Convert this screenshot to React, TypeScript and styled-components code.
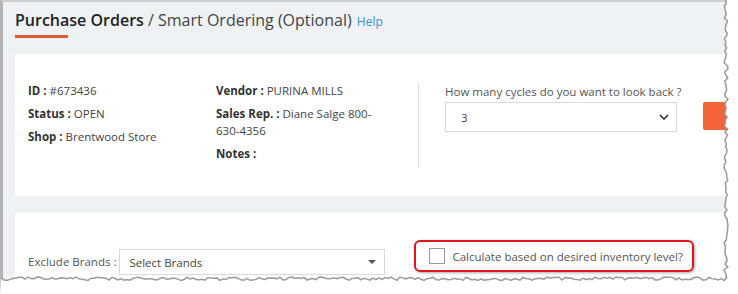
import React from 'react';
import styled, { createGlobalStyle } from 'styled-components';

const GlobalStyle = createGlobalStyle`
  html, body {
    margin: 0;
    padding: 0;
    background: #ffffff;
  }
  body {
    font-family: "Open Sans", "Liberation Sans", sans-serif;
    font-size: 11.5px;
    color: #333;
  }
`;

const Page = styled.div`
  position: relative;
  width: 738px;
  height: 294px;
  overflow: hidden;
`;

const Frame = styled.div`
  box-sizing: border-box;
  width: 735px;
  height: 294px;
  background: #eef2f5;
  border-left: 3px solid #b4b4b4;
  border-top: 2px solid #cfcfcf;
  padding: 0 0 0 12px;
  display: flex;
  flex-direction: column;
`;

const TitleBar = styled.div`
  padding-top: 7px;
  height: 52px;
  box-sizing: border-box;
`;

const Title = styled.h1`
  margin: 0;
  font-size: 16px;
  font-weight: 400;
  color: #444;
  line-height: 22px;
  white-space: nowrap;
`;

const Strong = styled.span`
  font-weight: 600;
  color: #222;
`;

const Help = styled.a`
  font-size: 12px;
  color: #3b8fd1;
  margin-left: 1px;
  text-decoration: none;
`;

const Underline = styled.div`
  width: 53px;
  height: 3px;
  background: #e05a33;
  margin-top: 2px;
`;

const Card = styled.div<{ $height: number }>`
  background: #fff;
  height: ${(p) => p.$height}px;
  flex-shrink: 0;
  box-sizing: border-box;
`;

const InfoRow = styled.div`
  display: flex;
  padding: 28px 0 0 13px;
`;

const Column = styled.div<{ $width: number; $pad: number }>`
  width: ${(p) => p.$width}px;
  padding-right: ${(p) => p.$pad}px;
  box-sizing: border-box;
  flex-shrink: 0;
  display: flex;
  flex-direction: column;
  gap: 6px;
`;

const Field = styled.div`
  line-height: 17px;
  color: #444;
`;

const Key = styled.b`
  font-weight: 700;
  color: #333;
`;

const CycleBlock = styled.div`
  flex-shrink: 0;
  border-left: 1px solid #e2e2e2;
  height: 86px;
  padding-left: 26px;
  display: flex;
  gap: 26px;
`;

const CycleInner = styled.div`
  width: 232px;
  flex-shrink: 0;
  padding-top: 2px;
`;

const Label = styled.div`
  color: #555;
  line-height: 16px;
  margin-bottom: 2px;
  white-space: nowrap;
`;

const SelectBox = styled.div<{ $width: number; $height: number }>`
  box-sizing: border-box;
  width: ${(p) => p.$width}px;
  height: ${(p) => p.$height}px;
  flex-shrink: 0;
  border: 1px solid #d9d9d9;
  background: #fff;
  display: flex;
  align-items: center;
  justify-content: space-between;
  color: #444;
`;

const SelectValue = styled.span<{ $pad: number }>`
  padding-left: ${(p) => p.$pad}px;
`;

const OrangeButton = styled.div`
  width: 40px;
  height: 28px;
  flex-shrink: 0;
  background: #f4623a;
  border-radius: 2px;
  margin-top: 20px;
`;

const Gap = styled.div`
  height: 17px;
  flex-shrink: 0;
`;

const FilterRow = styled.div`
  display: flex;
  align-items: flex-start;
  padding: 36px 0 0 13px;
`;

const FilterLabel = styled.span`
  color: #555;
  line-height: 26px;
  margin-right: 3px;
`;

const Highlight = styled.div`
  margin: -9px 0 0 29px;
  border: 2px solid #e0141c;
  border-radius: 6px;
  height: 32px;
  width: 280px;
  box-sizing: border-box;
  display: flex;
  align-items: center;
  padding-left: 13px;
  box-shadow: 1px 1px 3px rgba(0, 0, 0, 0.35);
`;

const Check = styled.span`
  width: 16px;
  height: 16px;
  border: 1px solid #9a9a9a;
  box-sizing: border-box;
  margin-right: 7px;
`;

const CheckText = styled.span`
  color: #555;
  white-space: nowrap;
`;

const Torn = styled.svg`
  position: absolute;
  left: 0;
  top: 0;
  pointer-events: none;
`;

function jagged(): { right: string; bottom: string } {
  let seed = 7;
  const rnd = () => {
    seed = (seed * 9301 + 49297) % 233280;
    return seed / 233280;
  };
  const r: string[] = [];
  for (let y = 0; y <= 279; y += 3) r.push(`${724 + rnd() * 4},${y}`);
  const b: string[] = [];
  for (let x = 727; x >= 0; x -= 3) b.push(`${x},${277 + rnd() * 3.5}`);
  return { right: r.join(' '), bottom: b.join(' ') };
}

const edge = jagged();

const App: React.FC = () => (
  <Page>
    <GlobalStyle />
    <Frame>
      <TitleBar>
        <Title>
          <Strong>Purchase Orders</Strong> / Smart Ordering (Optional) <Help>Help</Help>
        </Title>
        <Underline />
      </TitleBar>
      <Card $height={142}>
        <InfoRow>
          <Column $width={188} $pad={0}>
            <Field><Key>ID :</Key> #673436</Field>
            <Field><Key>Status :</Key> OPEN</Field>
            <Field><Key>Shop :</Key> Brentwood Store</Field>
          </Column>
          <Column $width={202} $pad={36}>
            <Field><Key>Vendor :</Key> PURINA MILLS</Field>
            <Field><Key>Sales Rep. :</Key> Diane Salge 800-630-4356</Field>
            <Field><Key>Notes :</Key></Field>
          </Column>
          <CycleBlock>
            <CycleInner>
              <Label>How many cycles do you want to look back ?</Label>
              <SelectBox $width={232} $height={30}>
                <SelectValue $pad={15}>3</SelectValue>
                <svg width="10" height="6" viewBox="0 0 10 6" style={{ marginRight: 7 }}>
                  <path d="M1 1 L5 5 L9 1" fill="none" stroke="#333" strokeWidth="1.6" />
                </svg>
              </SelectBox>
            </CycleInner>
            <OrangeButton />
          </CycleBlock>
        </InfoRow>
      </Card>
      <Gap />
      <Card $height={80}>
        <FilterRow>
          <FilterLabel>Exclude Brands :</FilterLabel>
          <SelectBox $width={266} $height={26}>
            <SelectValue $pad={9}>Select Brands</SelectValue>
            <svg width="8" height="4" viewBox="0 0 8 4" style={{ marginRight: 8 }}>
              <path d="M0 0 L8 0 L4 4 Z" fill="#555" />
            </svg>
          </SelectBox>
          <Highlight>
            <Check />
            <CheckText>Calculate based on desired inventory level?</CheckText>
          </Highlight>
        </FilterRow>
      </Card>
    </Frame>
    <Torn width="738" height="294" viewBox="0 0 738 294">
      <polygon points={`${edge.right} 738,280 738,0`} fill="#fff" />
      <polygon points={`${edge.bottom} 0,294 738,294 738,280`} fill="#fff" />
      <polyline points={edge.right} fill="none" stroke="#9a9a9a" strokeWidth="1.5" />
      <polyline points={edge.bottom} fill="none" stroke="#9a9a9a" strokeWidth="1.5" />
    </Torn>
  </Page>
);

export default App;
